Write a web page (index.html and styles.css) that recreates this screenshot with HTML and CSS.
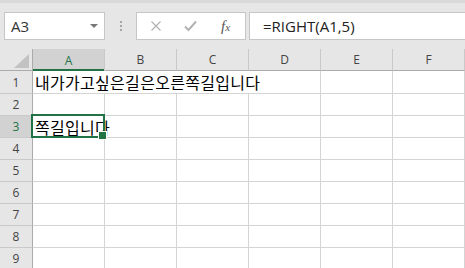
FILE: index.html
```html
<!DOCTYPE html>
<html lang="ko">
<head>
    <meta charset="UTF-8">
    <title>Excel - RIGHT</title>
    <link rel="stylesheet" href="styles.css">
</head>
<body>
    <div class="toolbar">
        <div class="namebox">
            <span>A3</span>
            <span class="caret"></span>
        </div>
        <div class="grip">
            <span></span><span></span><span></span>
        </div>
        <div class="fbuttons">
            <svg class="ficon" width="12" height="12" viewBox="0 0 12 12">
                <path d="M1.5 1.5 L10.5 10.5 M10.5 1.5 L1.5 10.5" stroke="#b3b3b3" stroke-width="1.3" fill="none"/>
            </svg>
            <svg class="ficon" width="13" height="12" viewBox="0 0 13 12">
                <path d="M1 6.5 L4.5 10 L12 1.5" stroke="#b3b3b3" stroke-width="2" fill="none"/>
            </svg>
            <span class="fx">f<small>x</small></span>
        </div>
        <div class="finput">=RIGHT(A1,5)</div>
    </div>

    <div class="sheet">
        <div class="corner">
            <svg width="15" height="14" viewBox="0 0 15 14"><path d="M15 0 L15 14 L0 14 Z" fill="#c2c2c2"/></svg>
        </div>
        <div class="colhead active">A</div>
        <div class="colhead">B</div>
        <div class="colhead">C</div>
        <div class="colhead">D</div>
        <div class="colhead">E</div>
        <div class="colhead">F</div>

        <div class="rowhead">1</div>
        <div class="cell wide">내가가고싶은길은오른쪽길입니다</div>
        <div class="cell"></div>
        <div class="cell"></div>

        <div class="rowhead">2</div>
        <div class="cell"></div><div class="cell"></div><div class="cell"></div>
        <div class="cell"></div><div class="cell"></div><div class="cell"></div>

        <div class="rowhead active">3</div>
        <div class="cell selected"><span>쪽길입니다</span></div>
        <div class="cell"></div><div class="cell"></div>
        <div class="cell"></div><div class="cell"></div><div class="cell"></div>

        <div class="rowhead">4</div>
        <div class="cell"></div><div class="cell"></div><div class="cell"></div>
        <div class="cell"></div><div class="cell"></div><div class="cell"></div>

        <div class="rowhead">5</div>
        <div class="cell"></div><div class="cell"></div><div class="cell"></div>
        <div class="cell"></div><div class="cell"></div><div class="cell"></div>

        <div class="rowhead">6</div>
        <div class="cell"></div><div class="cell"></div><div class="cell"></div>
        <div class="cell"></div><div class="cell"></div><div class="cell"></div>

        <div class="rowhead">7</div>
        <div class="cell"></div><div class="cell"></div><div class="cell"></div>
        <div class="cell"></div><div class="cell"></div><div class="cell"></div>

        <div class="rowhead">8</div>
        <div class="cell"></div><div class="cell"></div><div class="cell"></div>
        <div class="cell"></div><div class="cell"></div><div class="cell"></div>

        <div class="rowhead">9</div>
        <div class="cell"></div><div class="cell"></div><div class="cell"></div>
        <div class="cell"></div><div class="cell"></div><div class="cell"></div>
    </div>
</body>
</html>
```

FILE: styles.css
```css
* {
    margin: 0;
    padding: 0;
    box-sizing: border-box;
}

body {
    width: 465px;
    height: 268px;
    overflow: hidden;
    background: #e6e6e6;
    font-family: 'Open Sans', 'Noto Sans', sans-serif;
    color: #222;
}

/* Formula bar */
.toolbar {
    height: 49px;
    display: flex;
    align-items: flex-start;
    padding: 12px 0 0 4px;
    background: linear-gradient(#d9d9d9 0, #d9d9d9 3px, #e6e6e6 3px);
}

.namebox {
    width: 101px;
    height: 28px;
    display: flex;
    align-items: center;
    justify-content: space-between;
    padding: 0 6px 0 6px;
    background: #fff;
    border: 1px solid #c6c6c6;
    font-size: 15px;
    color: #333;
}

.caret {
    width: 0;
    height: 0;
    border-left: 4px solid transparent;
    border-right: 4px solid transparent;
    border-top: 4px solid #777;
    margin-top: -1px;
}

.grip {
    width: 31px;
    height: 28px;
    display: flex;
    flex-direction: column;
    align-items: center;
    justify-content: center;
    gap: 2px;
}

.grip span {
    width: 2px;
    height: 2px;
    background: #a6a6a6;
}

.fbuttons {
    width: 110px;
    height: 28px;
    display: flex;
    align-items: center;
    padding-left: 13px;
    gap: 22px;
    background: #fff;
    border: 1px solid #c6c6c6;
}

.fx {
    font-family: 'Liberation Serif', serif;
    font-style: italic;
    font-size: 15px;
    color: #555;
    margin-left: 2px;
}

.fx small {
    font-size: 11px;
}

.finput {
    flex: 1;
    height: 28px;
    margin-left: 3px;
    padding-left: 13px;
    display: flex;
    align-items: center;
    background: #fff;
    border: 1px solid #c6c6c6;
    border-right: none;
    font-size: 15px;
    color: #222;
}

/* Worksheet grid */
.sheet {
    display: grid;
    grid-template-columns: 33px repeat(6, 72px);
    grid-template-rows: 22px 23px repeat(8, 22px);
    background: #fff;
}

.corner {
    background: #e6e6e6;
    border-right: 1px solid #ababab;
    border-bottom: 1px solid #ababab;
    display: flex;
    align-items: flex-end;
    justify-content: flex-end;
    padding: 0 3px 2px 0;
}

.colhead {
    background: #e6e6e6;
    border-right: 1px solid #c9c9c9;
    border-bottom: 1px solid #ababab;
    display: flex;
    align-items: center;
    justify-content: center;
    font-size: 12px;
    color: #444;
}

.colhead.active {
    background: #d2d2d2;
    color: #217346;
    border-bottom: none;
    box-shadow: inset 0 -2px 0 #217346;
}

.rowhead {
    background: #e6e6e6;
    border-right: 1px solid #ababab;
    border-bottom: 1px solid #c9c9c9;
    display: flex;
    align-items: center;
    justify-content: center;
    font-size: 12px;
    color: #444;
}

.rowhead.active {
    background: #d2d2d2;
    color: #217346;
}

.cell {
    border-right: 1px solid #d4d4d4;
    border-bottom: 1px solid #d4d4d4;
    padding: 0 0 0 2px;
    font-family: 'Noto Sans CJK KR', 'Noto Sans', sans-serif;
    font-size: 16px;
    letter-spacing: 0.3px;
    line-height: 22px;
    white-space: nowrap;
    color: #000;
}

.cell.wide {
    grid-column: span 4;
}

.cell.selected {
    position: relative;
    overflow: visible;
}

.cell.selected span {
    position: relative;
    z-index: 2;
}

/* selection frame and fill handle */
.cell.selected::after {
    content: "";
    position: absolute;
    top: -2px;
    left: -2px;
    right: -1px;
    bottom: -1px;
    border: 2px solid #217346;
    z-index: 1;
}

.cell.selected::before {
    content: "";
    position: absolute;
    right: -3px;
    bottom: -3px;
    width: 7px;
    height: 7px;
    background: #217346;
    border: 1px solid #fff;
    z-index: 3;
}
```
